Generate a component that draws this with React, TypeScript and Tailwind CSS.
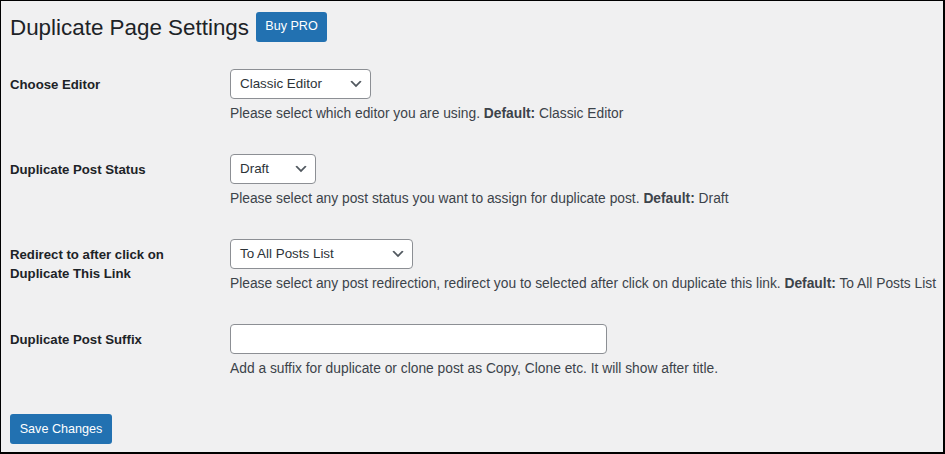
import React from 'react';

const font = { fontFamily: '"Liberation Sans", Arial, sans-serif' };

const Chevron: React.FC = () => (
  <svg width="16" height="16" viewBox="0 0 20 20" className="shrink-0">
    <path d="M5 6l5 5 5-5 2 1-7 7-7-7 2-1z" fill="#50575e" />
  </svg>
);

const FakeSelect: React.FC<{ value: string; width: string }> = ({ value, width }) => (
  <div
    className={`${width} h-[30px] flex items-center justify-between pl-[9px] pr-[6px] bg-white border border-[#8c8f94] rounded-[4px] text-[13.4px] text-[#2c3338]`}
  >
    <span>{value}</span>
    <Chevron />
  </div>
);

const Row: React.FC<{ label: React.ReactNode; control: React.ReactNode; desc: React.ReactNode }> = ({ label, control, desc }) => (
  <div className="flex">
    <div className="w-[220px] shrink-0 pt-[21px] pb-[20px] pr-[10px] text-[13.2px] leading-[19px] font-bold text-[#1d2327]">
      {label}
    </div>
    <div className="py-[15px]">
      {control}
      <p className="mt-[5px] text-[13.8px] leading-[20px] text-[#3c434a] whitespace-nowrap">{desc}</p>
    </div>
  </div>
);

export default function App() {
  return (
    <div
      className="w-[945px] h-[454px] bg-[#f0f0f1] border-l border-t border-r-2 border-b-2 border-black pl-[9px] overflow-hidden"
      style={font}
    >
      {/* Titulo */}
      <div className="flex items-center gap-[7px] pt-[9px]">
        <h1 className="text-[22.4px] leading-[30px] text-[#1d2327] pt-[3px]">Duplicate Page Settings</h1>
        <button className="h-[30px] w-[71px] rounded-[3px] bg-[#2271b1] text-white text-[12.6px]">Buy PRO</button>
      </div>

      <div className="mt-[11px]">
        <Row
          label="Choose Editor"
          control={<FakeSelect value="Classic Editor" width="w-[141px]" />}
          desc={<>Please select which editor you are using. <b>Default:</b> Classic Editor</>}
        />
        <Row
          label="Duplicate Post Status"
          control={<FakeSelect value="Draft" width="w-[86px]" />}
          desc={<>Please select any post status you want to assign for duplicate post. <b>Default:</b> Draft</>}
        />
        <Row
          label={<>Redirect to after click on<br />Duplicate This Link</>}
          control={<FakeSelect value="To All Posts List" width="w-[183px]" />}
          desc={<>Please select any post redirection, redirect you to selected after click on duplicate this link. <b>Default:</b> To All Posts List</>}
        />
        <Row
          label="Duplicate Post Suffix"
          control={<div className="w-[377px] h-[30px] bg-white border border-[#8c8f94] rounded-[4px]" />}
          desc="Add a suffix for duplicate or clone post as Copy, Clone etc. It will show after title."
        />
      </div>

      <button className="mt-[20px] h-[30px] w-[102px] rounded-[3px] bg-[#2271b1] text-white text-[12.6px]">
        Save Changes
      </button>
    </div>
  );
}
